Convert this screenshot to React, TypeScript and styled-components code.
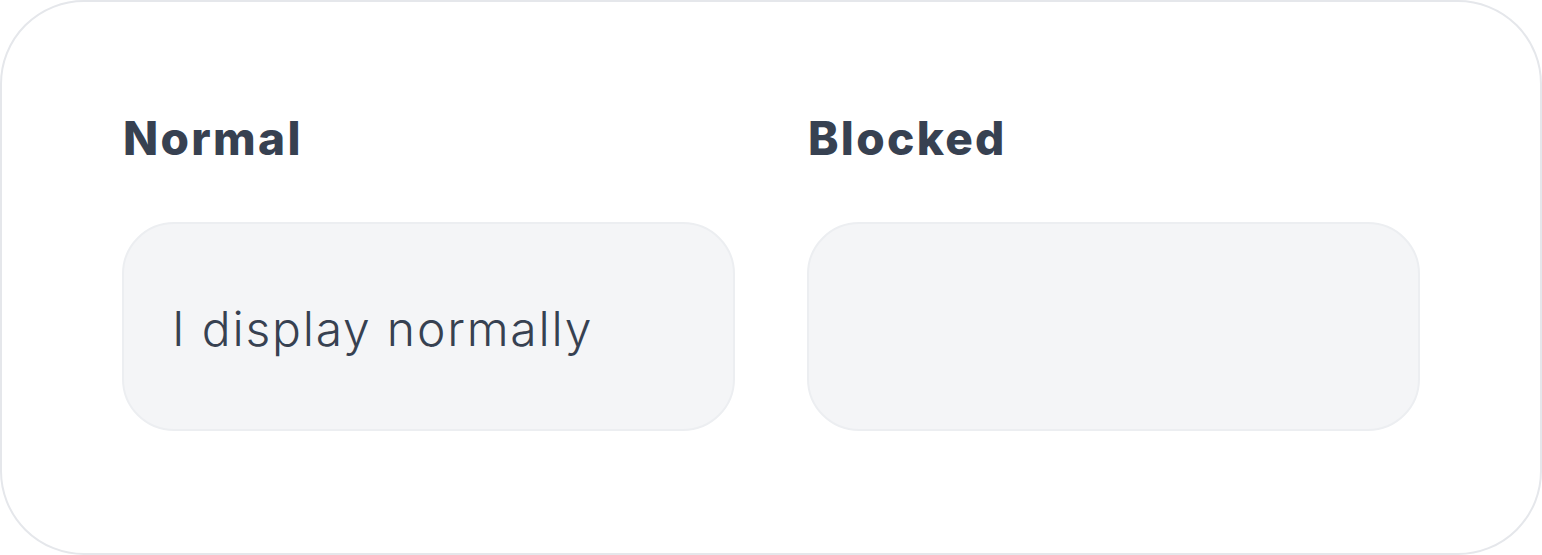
import React from "react";
import styled, { createGlobalStyle } from "styled-components";

const Global = createGlobalStyle`
  html, body { margin: 0; padding: 0; background: #ffffff; }
  body { font-family: "Poppins", "Inter", "Noto Sans", sans-serif; }
  * { box-sizing: border-box; }
`;

const Card = styled.div`
  width: 1542px;
  height: 555px;
  border: 2px solid #e5e7eb;
  border-radius: 84px;
  background: #ffffff;
  padding: 100px 120px 120px;
  display: grid;
  grid-template-columns: 1fr 1fr;
  column-gap: 72px;
`;

const Column = styled.div`
  display: flex;
  flex-direction: column;
  gap: 48px;
`;

const Heading = styled.h2`
  margin: 0;
  padding-left: 1px;
  font-family: "Inter", "Noto Sans", sans-serif;
  font-weight: 800;
  font-size: 46px;
  line-height: 72px;
  color: #374151;
  letter-spacing: 2.3px;
`;

const Panel = styled.div`
  height: 209px;
  border: 2px solid #eceef1;
  border-radius: 52px;
  background: #f4f5f7;
  padding: 4px 48px 0;
  display: flex;
  align-items: center;
`;

const PanelText = styled.span<{ $hidden?: boolean }>`
  font-family: "Inter", "Noto Sans", sans-serif;
  font-weight: 300;
  font-size: 48px;
  line-height: 72px;
  color: #374151;
  letter-spacing: 1.8px;
  visibility: ${(p) => (p.$hidden ? "hidden" : "visible")};
`;

export default function App() {
  return (
    <>
      <Global />
      <Card>
        <Column>
          <Heading>Normal</Heading>
          <Panel>
            <PanelText>I display normally</PanelText>
          </Panel>
        </Column>
        <Column>
          <Heading>Blocked</Heading>
          <Panel>
            <PanelText $hidden>I am blocked</PanelText>
          </Panel>
        </Column>
      </Card>
    </>
  );
}
